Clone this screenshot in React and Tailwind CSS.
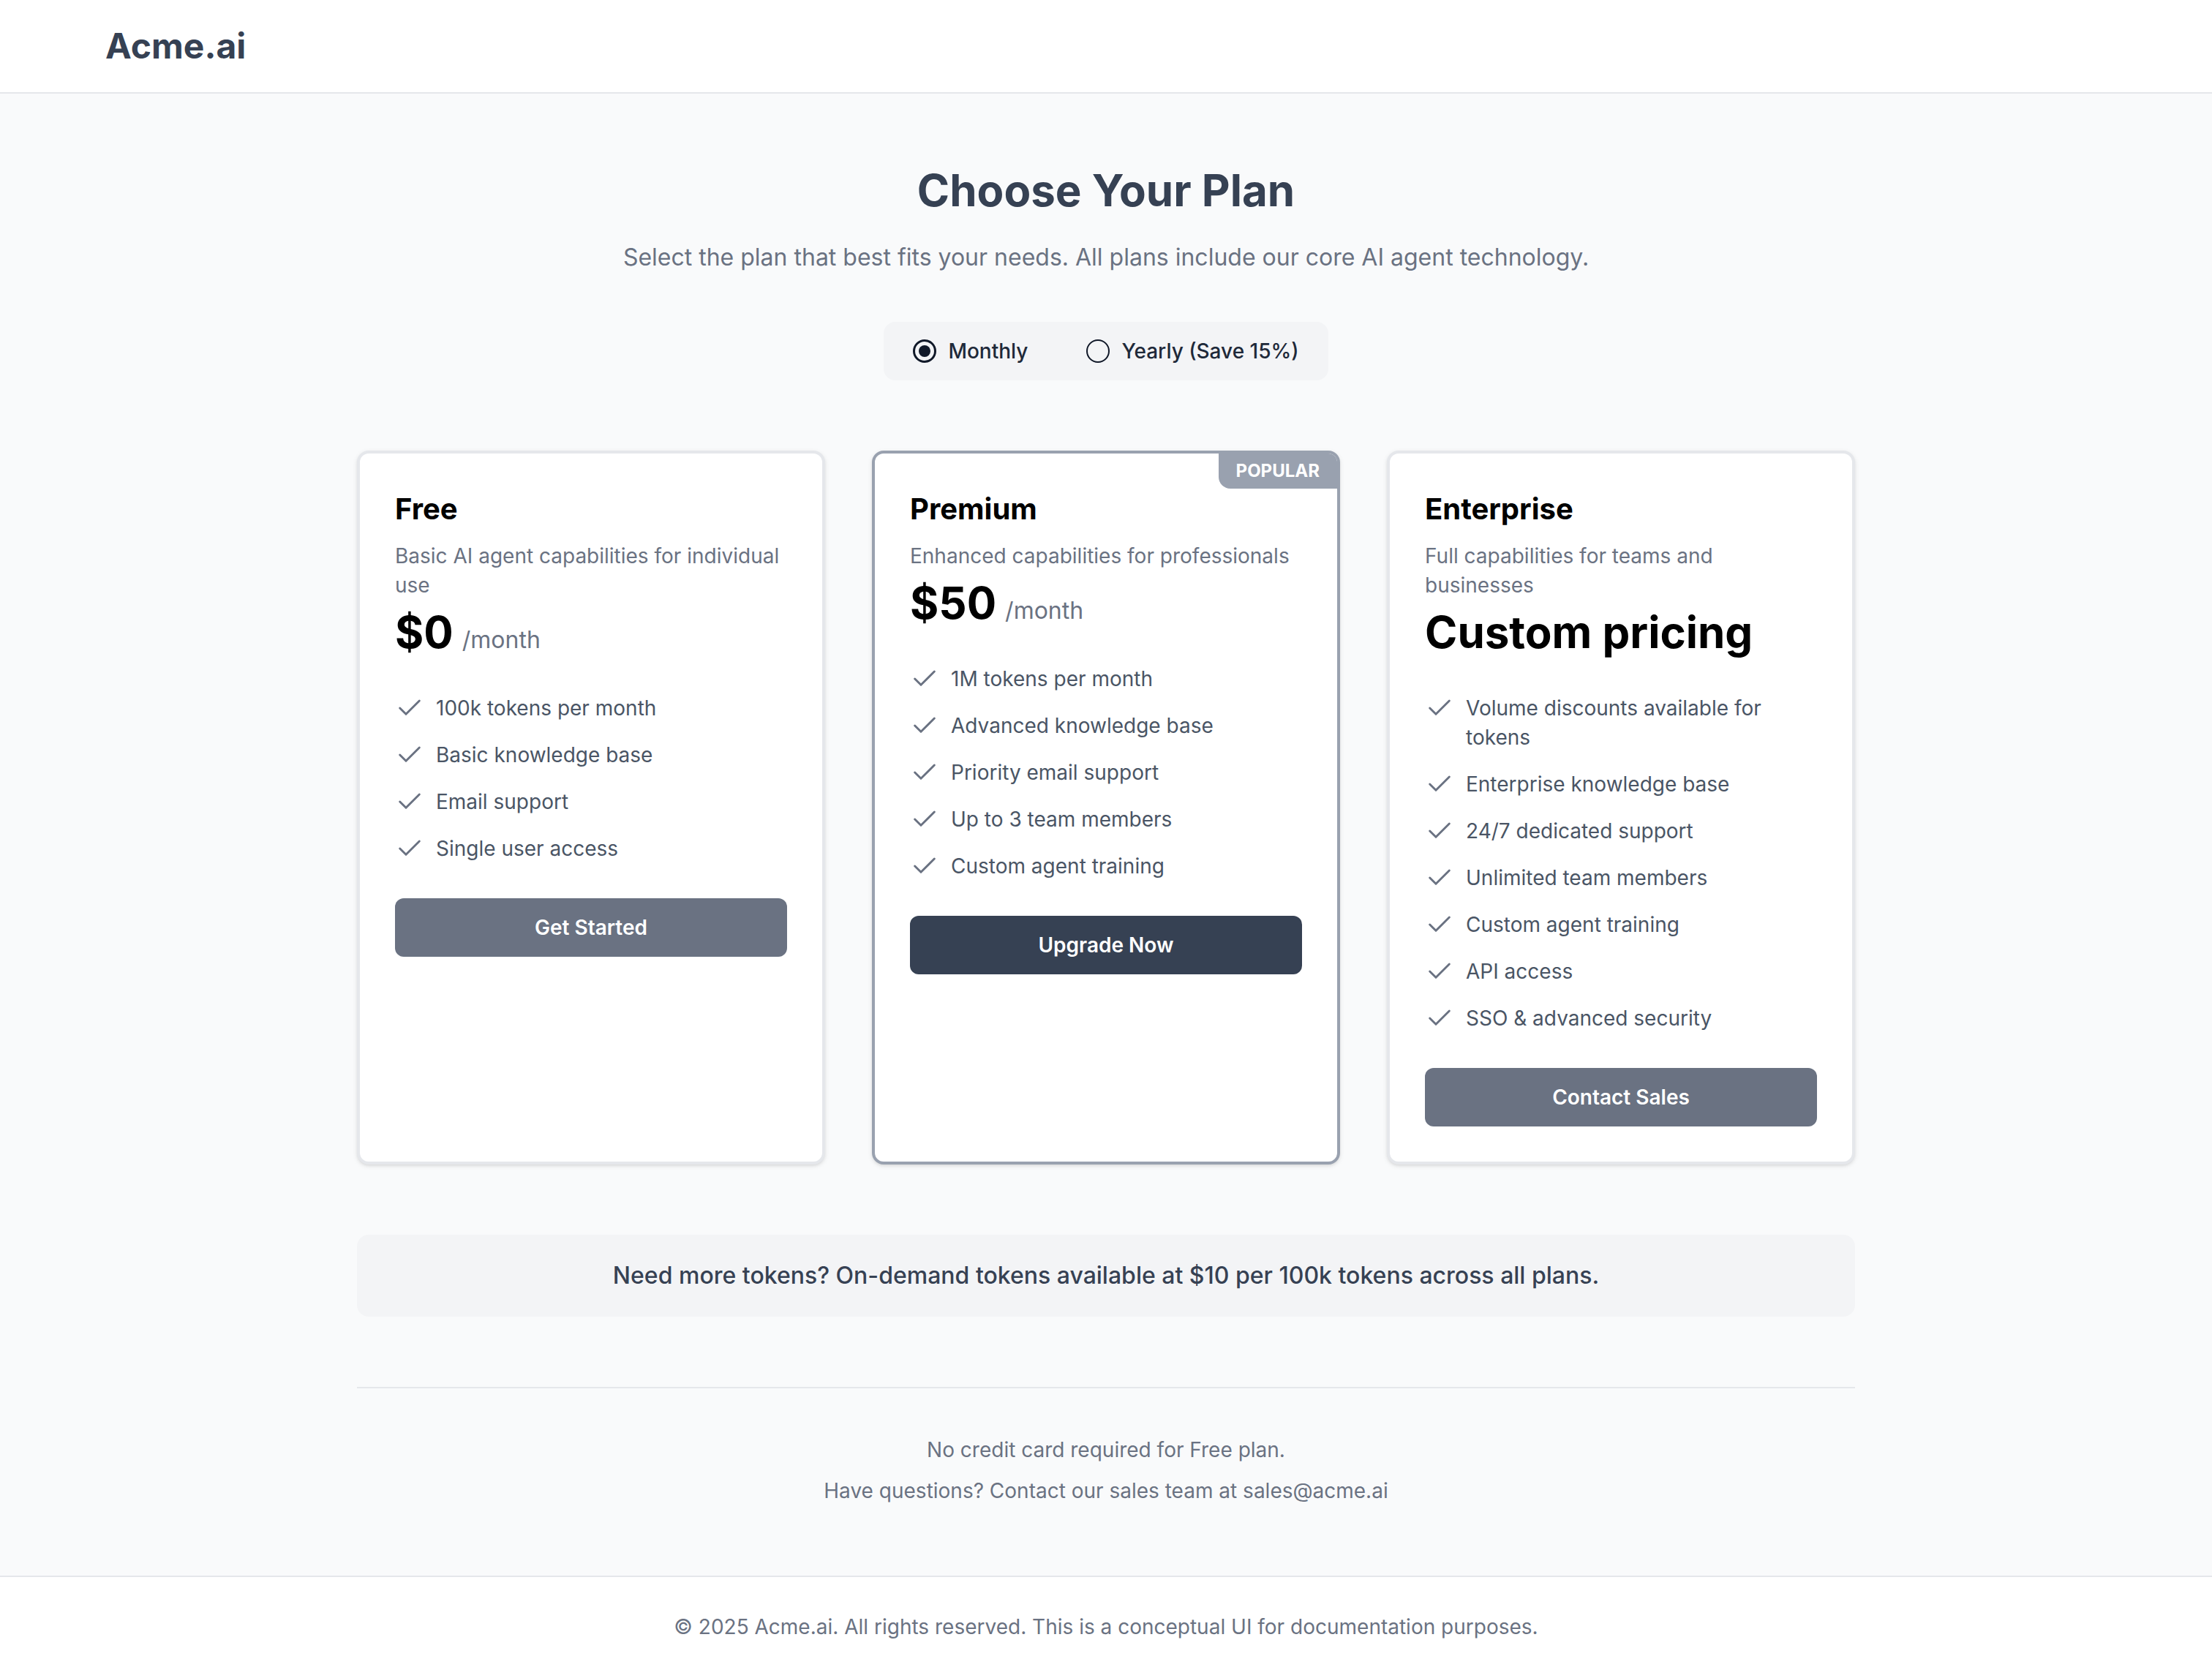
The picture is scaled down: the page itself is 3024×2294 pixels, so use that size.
import React, { useState } from 'react';
import { Check } from 'lucide-react';

const plans = [
  {
    name: 'Free',
    desc: 'Basic AI agent capabilities for individual use',
    price: '$0',
    features: ['100k tokens per month', 'Basic knowledge base', 'Email support', 'Single user access'],
    cta: 'Get Started',
  },
  {
    name: 'Premium',
    desc: 'Enhanced capabilities for professionals',
    price: '$50',
    popular: true,
    features: [
      '1M tokens per month',
      'Advanced knowledge base',
      'Priority email support',
      'Up to 3 team members',
      'Custom agent training',
    ],
    cta: 'Upgrade Now',
  },
  {
    name: 'Enterprise',
    desc: 'Full capabilities for teams and businesses',
    custom: 'Custom pricing',
    features: [
      'Volume discounts available for tokens',
      'Enterprise knowledge base',
      '24/7 dedicated support',
      'Unlimited team members',
      'Custom agent training',
      'API access',
      'SSO & advanced security',
    ],
    cta: 'Contact Sales',
  },
];

function Radio({ checked }) {
  return (
    <span
      className={
        checked
          ? 'flex h-4 w-4 items-center justify-center rounded-full border-[1.5px] border-gray-900'
          : 'flex h-4 w-4 items-center justify-center rounded-full border border-gray-900'
      }
    >
      {checked && <span className="h-2 w-2 rounded-full bg-gray-900" />}
    </span>
  );
}

function PlanCard({ plan }) {
  return (
    <div
      className={
        plan.popular
          ? 'relative overflow-hidden rounded-lg border-2 border-gray-400 bg-white p-6 shadow-sm'
          : 'relative overflow-hidden rounded-lg border-2 border-gray-200 bg-white p-6 shadow-sm'
      }
    >
      {plan.popular && (
        <span className="absolute right-0 top-0 rounded-bl-lg bg-gray-400 px-3 py-1 text-xs font-bold text-white">
          POPULAR
        </span>
      )}
      <h3 className="text-xl font-bold text-black">{plan.name}</h3>
      <p className="mt-2 text-sm text-gray-500">{plan.desc}</p>
      {plan.custom ? (
        <div className="mt-1 text-3xl font-bold text-black">{plan.custom}</div>
      ) : (
        <div className="mt-1 flex items-baseline">
          <span className="text-3xl font-bold text-black">{plan.price}</span>
          <span className="ml-1.5 text-base text-gray-500">/month</span>
        </div>
      )}
      <ul className="mt-6 space-y-3">
        {plan.features.map((f) => (
          <li key={f} className="flex items-start gap-2 text-sm text-gray-600">
            <Check className="h-5 w-5 shrink-0 text-gray-500" strokeWidth={1.75} />
            <span>{f}</span>
          </li>
        ))}
      </ul>
      <button
        className={
          plan.popular
            ? 'mt-6 w-full rounded-md bg-gray-700 py-2.5 text-sm font-semibold text-white'
            : 'mt-6 w-full rounded-md bg-gray-500 py-2.5 text-sm font-semibold text-white'
        }
      >
        {plan.cta}
      </button>
    </div>
  );
}

export default function App() {
  const [billing, setBilling] = useState('monthly');

  // page is laid out at 1512px wide and shown at 2x
  return (
    <div className="flex flex-col bg-gray-50 font-[Inter,sans-serif] [zoom:2]">
      <header className="flex h-16 items-center border-b border-gray-200 bg-white px-18">
        <span className="text-2xl font-bold text-gray-700">Acme.ai</span>
      </header>

      <main className="flex-1">
        <div className="mx-auto max-w-5xl pt-12 pb-12">
          <h1 className="text-center text-3xl font-bold text-gray-700">Choose Your Plan</h1>
          <p className="mt-4 text-center text-base text-gray-500">
            Select the plan that best fits your needs. All plans include our core AI agent technology.
          </p>

          <div className="mt-8 flex justify-center">
            <div className="flex h-10 items-center gap-10 rounded-lg bg-gray-100 px-5">
              <label className="flex cursor-pointer items-center gap-2" onClick={() => setBilling('monthly')}>
                <Radio checked={billing === 'monthly'} />
                <span className="text-sm font-medium text-gray-800">Monthly</span>
              </label>
              <label className="flex cursor-pointer items-center gap-2" onClick={() => setBilling('yearly')}>
                <Radio checked={billing === 'yearly'} />
                <span className="text-sm font-medium text-gray-800">Yearly (Save 15%)</span>
              </label>
            </div>
          </div>

          <div className="mt-12 grid grid-cols-3 gap-8">
            {plans.map((p) => (
              <PlanCard key={p.name} plan={p} />
            ))}
          </div>

          <div className="mt-12 rounded-lg bg-gray-100 py-4 text-center text-base font-medium text-gray-700">
            Need more tokens? On-demand tokens available at $10 per 100k tokens across all plans.
          </div>

          <div className="mt-12 border-t border-gray-200 pt-8 text-center text-sm text-gray-500">
            <p>No credit card required for Free plan.</p>
            <p className="mt-2">Have questions? Contact our sales team at sales@acme.ai</p>
          </div>
        </div>
      </main>

      <footer className="border-t border-gray-200 bg-white py-6 text-center text-sm text-gray-500">
        © 2025 Acme.ai. All rights reserved. This is a conceptual UI for documentation purposes.
      </footer>
    </div>
  );
}
